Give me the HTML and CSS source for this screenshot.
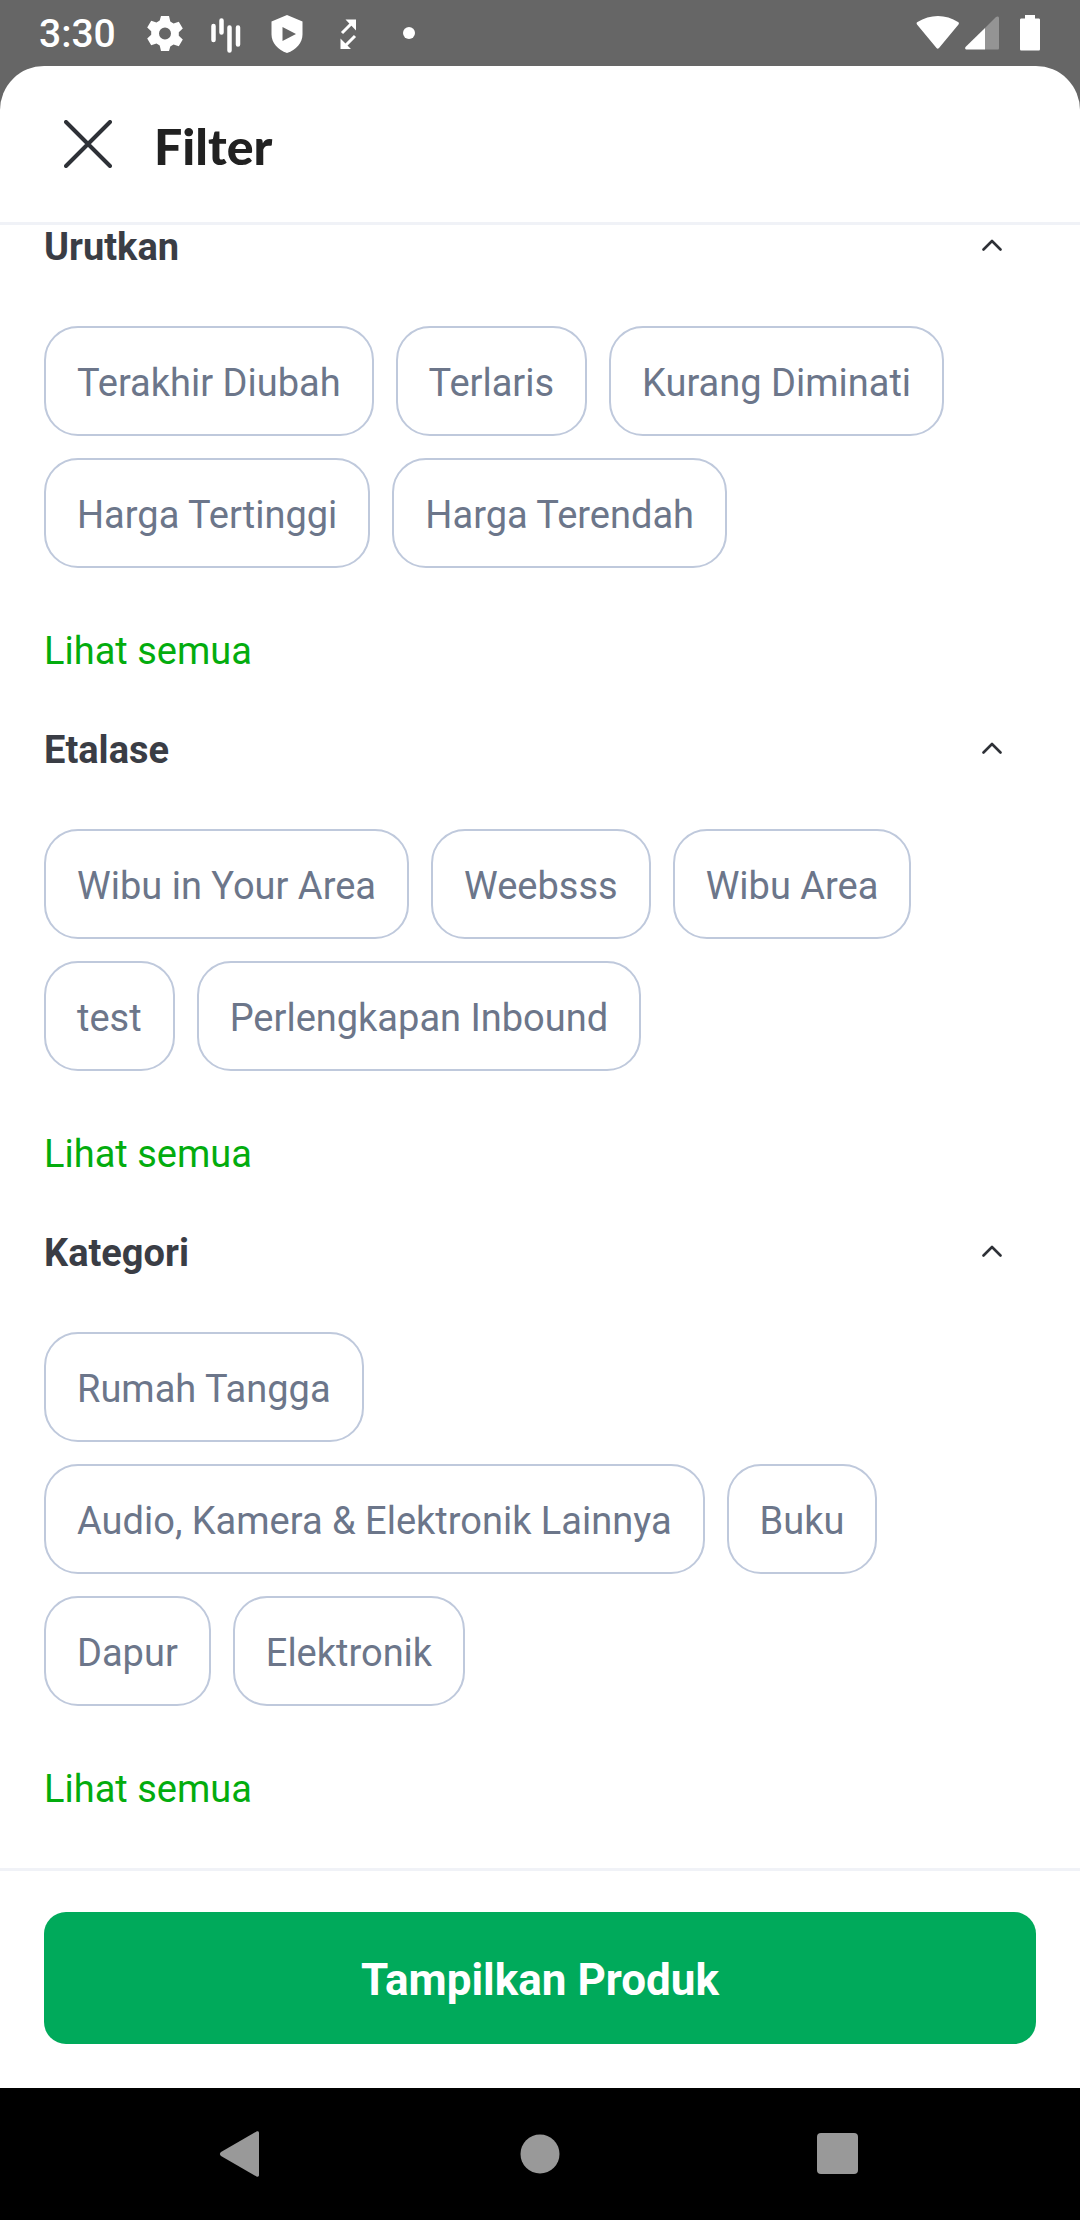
FILE: index.html
```html
<!DOCTYPE html>
<html lang="id">
<head>
<meta charset="utf-8">
<meta name="viewport" content="width=device-width, initial-scale=1">
<title>Filter</title>
<link rel="stylesheet" href="styles.css">
</head>
<body>
<div class="status-bar">
  <span class="clock">3:30</span>
  <div class="status-icons">
    <svg class="status-icon" viewBox="0 0 44 44" aria-hidden="true"><path fill="#fff" fill-rule="evenodd" d="M18 5h8l1.300 5.500 3.200 1.900 5.300-1.700 4 6.800-4 3.700v3.600l4 3.700-4 6.800-5.300-1.700-3.200 1.900L26 40h-8l-1.300-5.500-3.200-1.900-5.300 1.700-4-6.800 4-3.700v-3.600l-4-3.700 4-6.800 5.300 1.700 3.200-1.900zM22 16.500a6 6 0 1 0 0 12 6 6 0 1 0 0-12z"/></svg>
    <svg class="status-icon" viewBox="0 0 44 44" aria-hidden="true"><path stroke="#fff" stroke-width="4.500" stroke-linecap="round" d="M9.500 15v14M17.500 9.500v12M25.500 16.500v23M34 16.500v17"/></svg>
    <svg class="status-icon" viewBox="0 0 44 44" aria-hidden="true"><path fill="#fff" fill-rule="evenodd" d="M22 4l15.500 6.500v13C37.500 32 31 39 22 42 13 39 6.500 32 6.500 23.500v-13zM17.500 16v14L31 23z"/></svg>
    <svg class="status-icon" viewBox="0 0 44 44" aria-hidden="true"><path fill="none" stroke="#fff" stroke-width="3" d="M16 22L27 11M29 25L18 36"/><path fill="#fff" d="M19.500 8.500H30v11zM14.500 27.500v10.500H25z"/></svg>
    <svg class="status-icon" viewBox="0 0 44 44" aria-hidden="true"><circle cx="22" cy="22" r="6" fill="#fff"/></svg>
  </div>
  <div class="system-icons">
    <svg width="44" height="36" viewBox="0 0 44 36" aria-hidden="true"><path fill="#fff" d="M1 9.500C.3 8.500.5 7.500 1.500 7 14-1 30-1 42 7c1 .5 1.200 1.500.5 2.500L23 33c-1 1-1.700 1-2.500 0z"/></svg>
    <svg width="34" height="36" viewBox="0 0 34 36" aria-hidden="true"><path fill="#949494" d="M20 13L31 2c1.500-1 3-.5 3 1v30c0 1-.5 1.500-1.500 1.500H20z"/><path fill="#fff" d="M20 13v21.500H2c-2 0-2.500-1.500-1-3z"/></svg>
    <svg class="battery" width="20" height="36" viewBox="0 0 20 36" aria-hidden="true"><path fill="#fff" d="M5 0h10v3.500h3.500c1 0 1.500.5 1.500 1.500v29c0 1-.5 1.500-1.500 1.500h-17C.5 35.500 0 35 0 34V5c0-1 .5-1.500 1.500-1.500H5z"/></svg>
  </div>
</div>

<div class="sheet">
  <header class="sheet-header">
    <button class="close" type="button" aria-label="Tutup">
      <svg width="48" height="48" viewBox="0 0 48 48" aria-hidden="true"><path d="M2 2l44 44M46 2L2 46" stroke="#2e3137" stroke-width="4" stroke-linecap="round"/></svg>
    </button>
    <h1 class="sheet-title">Filter</h1>
  </header>

  <main class="filters">
    <section class="group">
      <div class="group-header">
        <h2 class="group-title">Urutkan</h2>
        <button class="toggle" type="button" aria-label="Ciutkan Urutkan"><svg width="20" height="12" viewBox="0 0 20 12" aria-hidden="true"><path d="M1.500 10.500L10 2l8.500 8.500" fill="none" stroke="#2e3137" stroke-width="2.600" stroke-linecap="round" stroke-linejoin="round"/></svg></button>
      </div>
      <div class="chips">
        <button class="chip" type="button">Terakhir Diubah</button>
        <button class="chip" type="button">Terlaris</button>
        <button class="chip" type="button">Kurang Diminati</button>
        <button class="chip" type="button">Harga Tertinggi</button>
        <button class="chip" type="button">Harga Terendah</button>
      </div>
      <a class="see-all" href="#">Lihat semua</a>
    </section>

    <section class="group">
      <div class="group-header">
        <h2 class="group-title">Etalase</h2>
        <button class="toggle" type="button" aria-label="Ciutkan Etalase"><svg width="20" height="12" viewBox="0 0 20 12" aria-hidden="true"><path d="M1.500 10.500L10 2l8.500 8.500" fill="none" stroke="#2e3137" stroke-width="2.600" stroke-linecap="round" stroke-linejoin="round"/></svg></button>
      </div>
      <div class="chips">
        <button class="chip" type="button">Wibu in Your Area</button>
        <button class="chip" type="button">Weebsss</button>
        <button class="chip" type="button">Wibu Area</button>
        <button class="chip" type="button">test</button>
        <button class="chip" type="button">Perlengkapan Inbound</button>
      </div>
      <a class="see-all" href="#">Lihat semua</a>
    </section>

    <section class="group">
      <div class="group-header">
        <h2 class="group-title">Kategori</h2>
        <button class="toggle" type="button" aria-label="Ciutkan Kategori"><svg width="20" height="12" viewBox="0 0 20 12" aria-hidden="true"><path d="M1.500 10.500L10 2l8.500 8.500" fill="none" stroke="#2e3137" stroke-width="2.600" stroke-linecap="round" stroke-linejoin="round"/></svg></button>
      </div>
      <div class="chips">
        <button class="chip" type="button">Rumah Tangga</button>
        <button class="chip" type="button">Audio, Kamera &amp; Elektronik Lainnya</button>
        <button class="chip" type="button">Buku</button>
        <button class="chip" type="button">Dapur</button>
        <button class="chip" type="button">Elektronik</button>
      </div>
      <a class="see-all" href="#">Lihat semua</a>
    </section>
  </main>

  <footer class="actions">
    <button class="apply" type="button">Tampilkan Produk</button>
  </footer>
</div>

<nav class="nav-bar">
  <button class="nav-button" type="button" aria-label="Kembali"><svg width="48" height="48" viewBox="0 0 48 48" aria-hidden="true"><path fill="#999" d="M5 22L40.500 1.500c1.500-.5 2.500 0 2.500 1.500v42c0 1.500-1 2-2.500 1.500L5 26c-1.500-1-1.500-3 0-4z"/></svg></button>
  <button class="nav-button" type="button" aria-label="Beranda"><svg width="48" height="48" viewBox="0 0 48 48" aria-hidden="true"><circle cx="24" cy="24" r="19.500" fill="#999"/></svg></button>
  <button class="nav-button" type="button" aria-label="Terbaru"><svg width="48" height="48" viewBox="0 0 48 48" aria-hidden="true"><rect x="1" y="3" width="41" height="41" rx="4" fill="#999"/></svg></button>
</nav>
</body>
</html>
```
FILE: styles.css
```css
* {
  box-sizing: border-box;
}

body {
  margin: 0;
  min-height: 100vh;
  display: flex;
  flex-direction: column;
  background: #666;
  font-family: Roboto, "Liberation Sans", sans-serif;
}

button {
  margin: 0;
  padding: 0;
  border: 0;
  background: none;
  font: inherit;
  cursor: pointer;
}

h1,
h2 {
  margin: 0;
}

svg {
  display: block;
}

.status-bar {
  display: flex;
  align-items: center;
  height: 66px;
  padding: 0 40px 0 39px;
  color: #fff;
}

.clock {
  padding-top: 2px;
  font-size: 39px;
  font-weight: 500;
  line-height: 64px;
}

.status-icons {
  display: flex;
  gap: 17px;
  margin-left: 27px;
}

.status-icon {
  width: 44px;
  height: 44px;
}

.system-icons {
  display: flex;
  gap: 5px;
  margin-left: auto;
}

.battery {
  margin-left: 16px;
}

.sheet {
  flex: 1;
  display: flex;
  flex-direction: column;
  border-radius: 44px 44px 0 0;
  background: #fff;
}

.sheet-header {
  display: flex;
  align-items: center;
  gap: 42px;
  padding: 44px 64px;
  border-bottom: 3px solid #f0f2f7;
}

.sheet-title {
  padding-top: 4px;
  color: #212121;
  font-family: Lato, sans-serif;
  font-size: 50px;
  font-weight: 900;
  line-height: 64px;
}

.filters {
  flex: 1;
  display: flex;
  flex-direction: column;
  gap: 55px;
  padding: 0 44px 57px;
}

.group-header {
  display: flex;
  align-items: flex-start;
  justify-content: space-between;
  margin-bottom: 57px;
  padding-right: 34px;
}

.toggle {
  padding-top: 14px;
}

.group-title {
  color: #3a3d45;
  font-size: 38px;
  font-weight: 700;
  line-height: 44px;
}

.chips {
  display: flex;
  flex-wrap: wrap;
  gap: 22px;
  margin-bottom: 61px;
}

.chip {
  height: 110px;
  padding: 4px 31px 0;
  border: 2px solid #bfc9dc;
  border-radius: 34px;
  color: #6c768a;
  font-size: 38px;
}

.see-all {
  display: block;
  width: max-content;
  color: #03ac0e;
  font-size: 38px;
  line-height: 44px;
  text-decoration: none;
}

.actions {
  padding: 41px 44px 44px;
  border-top: 3px solid #f0f2f7;
}

.apply {
  width: 100%;
  height: 132px;
  padding-top: 4px;
  border-radius: 22px;
  background: #00aa5b;
  color: #fff;
  font-size: 44px;
  font-weight: 700;
}

.nav-bar {
  display: flex;
  align-items: center;
  justify-content: space-between;
  height: 132px;
  padding: 0 216px;
  background: #000;
}
```
